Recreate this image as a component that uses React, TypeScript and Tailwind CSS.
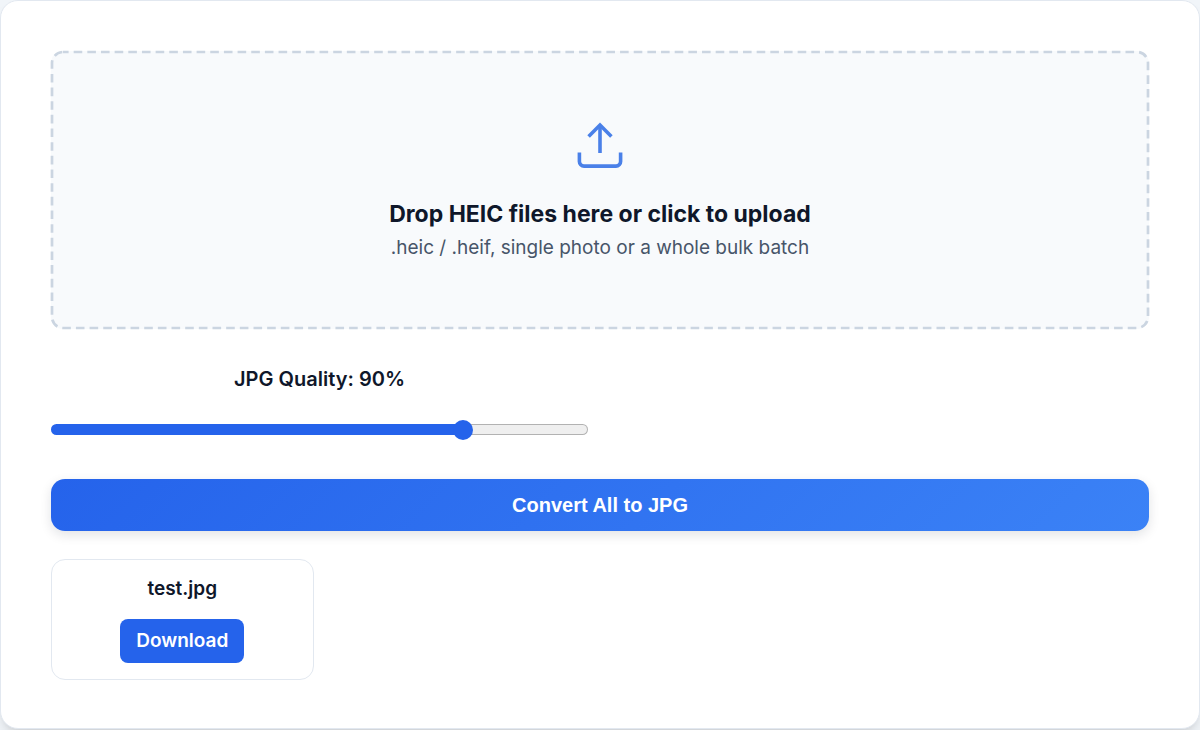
import React, { useState } from "react";

const MIN_QUALITY = 55;
const MAX_QUALITY = 100;

function UploadIcon() {
  return (
    <svg
      width="48"
      height="48"
      viewBox="0 0 48 48"
      fill="none"
      stroke="#4a80e8"
      strokeWidth="3.6"
      aria-hidden="true"
    >
      <path d="M24 31V3" />
      <path d="M12.6 14.4 24 3l11.4 11.4" />
      <path d="M3.4 30.5v9a4.6 4.6 0 0 0 4.6 4.6h32a4.6 4.6 0 0 0 4.6-4.6v-9" />
    </svg>
  );
}

function DropZone() {
  return (
    <label className="relative flex flex-col items-center rounded-xl bg-[#f8fafc] px-6 pt-[71px] pb-[67px] text-center cursor-pointer">
      <input type="file" accept=".heic,.heif" multiple className="sr-only" />
      {/* Dashed outline */}
      <svg
        className="absolute inset-px w-[calc(100%-2px)] h-[calc(100%-2px)] overflow-visible pointer-events-none"
        aria-hidden="true"
      >
        <rect
          width="100%"
          height="100%"
          rx="11"
          fill="none"
          stroke="#cbd5e1"
          strokeWidth="2.7"
          strokeDasharray="8.6 5.06"
          strokeDashoffset="3"
        />
      </svg>
      <UploadIcon />
      <span className="mt-7 text-[23px] leading-8 font-bold text-[#0f172a]">
        Drop HEIC files here or click to upload
      </span>
      <span className="mt-1 text-[19px] leading-7 text-[#475569]">
        .heic / .heif, single photo or a whole bulk batch
      </span>
    </label>
  );
}

function QualitySlider() {
  const [quality, setQuality] = useState(90);
  const percent = ((quality - MIN_QUALITY) / (MAX_QUALITY - MIN_QUALITY)) * 100;

  return (
    <div className="flex flex-col">
      <label
        htmlFor="quality"
        className="text-center text-xl leading-7 font-semibold text-[#0f172a]"
      >
        JPG Quality: {quality}%
      </label>
      <input
        id="quality"
        type="range"
        min={MIN_QUALITY}
        max={MAX_QUALITY}
        value={quality}
        onChange={(e) => setQuality(Number(e.target.value))}
        className="mt-[31px] h-[11px] appearance-none rounded-full border border-transparent cursor-pointer [&::-webkit-slider-thumb]:appearance-none [&::-webkit-slider-thumb]:w-5 [&::-webkit-slider-thumb]:h-5 [&::-webkit-slider-thumb]:rounded-full [&::-webkit-slider-thumb]:bg-[#2563eb]"
        style={{
          background: `linear-gradient(to right, #2563eb ${percent}%, transparent ${percent}%) border-box, linear-gradient(#efefef, #efefef) padding-box, linear-gradient(#b2b2b2, #b2b2b2) border-box`,
        }}
      />
    </div>
  );
}

export default function App() {
  const results = ["test.jpg"];

  return (
    <div className="min-h-screen bg-[#f1f5f9] font-[Inter,sans-serif]">
      <main className="rounded-[18px] border border-[#e2e8f0] bg-white px-[50px] pt-[50px] pb-12 shadow-lg">
        <DropZone />

        <div className="mt-9 grid grid-cols-2 gap-6">
          <QualitySlider />
        </div>

        <button
          type="button"
          className="mt-11 w-full rounded-[14px] bg-linear-135/srgb from-[#2563eb] to-[#3b82f6] py-3 text-xl leading-7 font-bold text-white shadow-[0_4px_12px_rgba(15,23,42,0.12)] font-['Liberation_Sans',sans-serif] cursor-pointer"
        >
          Convert All to JPG
        </button>

        <div className="mt-7 grid grid-cols-4 gap-4">
          {results.map((name) => (
            <div
              key={name}
              className="flex flex-col items-center rounded-[14px] border border-[#e2e8f0] px-4 pt-[15px] pb-4"
            >
              <span className="text-[19px] leading-7 font-semibold text-[#0f172a]">
                {name}
              </span>
              <a
                href="#"
                download={name}
                className="mt-4 rounded-lg bg-[#2563eb] px-4 py-2 text-[19px] leading-7 font-semibold text-white"
              >
                Download
              </a>
            </div>
          ))}
        </div>
      </main>
    </div>
  );
}
